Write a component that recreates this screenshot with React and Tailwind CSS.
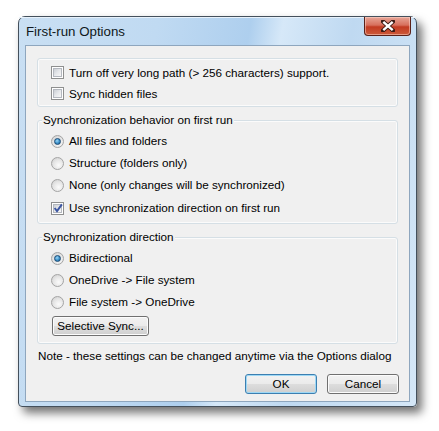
import React, { useState } from "react";

const Check = ({ checked }) => (
  <span className="w-[13px] h-[13px] shrink-0 border border-[#8e8f8f] bg-white p-[1px] flex">
    <span className="relative flex-1 border border-[#b4b8bf] bg-[linear-gradient(135deg,#cbcfd5_0%,#e6e8eb_50%,#f7f7f7_100%)]">
      {checked && (
        <svg viewBox="0 0 9 9" className="absolute left-[-1px] top-[-2px] w-[10px] h-[10px]">
          <path d="M1.5 4.5 L3.6 7.2 L8 1.2" fill="none" stroke="#3c56a2" strokeWidth="1.8" />
        </svg>
      )}
    </span>
  </span>
);

const Radio = ({ checked }) => (
  <span className="w-[13px] h-[13px] shrink-0 rounded-full border border-[#a4a4a4] bg-[radial-gradient(circle_at_60%_65%,#fbfbfb_0%,#e4e4e4_55%,#c8c8c8_100%)] flex items-center justify-center">
    {checked && (
      <span className="w-[7px] h-[7px] rounded-full border border-[#1b4a74] bg-[radial-gradient(circle_at_40%_35%,#9bd6f6_0%,#3a8fc8_55%,#1c5b8c_100%)]" />
    )}
  </span>
);

const Row = ({ h = "h-[22px]", children }) => (
  <div className={`${h} flex items-center gap-[5px] pl-[13px]`}>{children}</div>
);

const Group = ({ label, className, children }) => (
  <div className={`mx-[11px] border border-[#d5dfe5] rounded-[3px] shadow-[inset_0_0_0_1px_#fbfbfb] ${className}`}>
    {label && (
      <div className="-mt-[8px] mb-[3px] ml-[4px] w-fit px-[1px] bg-[#f0f0f0] leading-[14px]">{label}</div>
    )}
    {children}
  </div>
);

const Btn = ({ primary, children, className = "" }) => (
  <button
    className={`h-[20px] rounded-[3px] border leading-[16px] ${
      primary
        ? "border-[#3c7fb1] shadow-[inset_0_0_0_1px_#9ed8f5]"
        : "border-[#707070] shadow-[inset_0_0_0_1px_#fcfcfc]"
    } bg-[linear-gradient(#f2f2f2_0%,#ebebeb_48%,#dddddd_52%,#cfcfcf_100%)] ${className}`}
  >
    {children}
  </button>
);

export default function App() {
  const [mode, setMode] = useState(0);
  const [dir, setDir] = useState(0);

  return (
    <div
      className="w-[439px] h-[431px] bg-white pl-[18px] pt-[16px] text-[11.7px] text-black"
      style={{ fontFamily: '"Liberation Sans", Arial, sans-serif' }}
    >
      <div className="w-[399px] h-[391px] rounded-t-[7px] rounded-b-[4px] border border-[#44505c] bg-[linear-gradient(100deg,#c9dff3_0%,#c0daf2_30%,#aecfee_50%,#d6e8f8_57%,#bfd9f1_72%,#d5e7f7_100%)] shadow-[5px_6px_10px_rgba(0,0,0,0.55)] flex flex-col">
        <div className="h-[28px] flex items-start justify-between pl-[7px] pr-[5px] shadow-[inset_0_1px_0_#e8f2fb]">
          <div className="pt-[7px] text-[13.3px] text-[#101820] leading-[15px]">First-run Options</div>
          <div className="w-[47px] h-[19px] rounded-b-[4px] border border-t-0 border-[#5a2018] bg-[linear-gradient(#e7a597_0%,#d7705d_45%,#c23b22_55%,#cc5a3a_100%)] shadow-[inset_0_0_0_1px_rgba(255,220,210,0.5)] flex items-center justify-center">
            <svg viewBox="0 0 14 12" className="w-[14px] h-[12px]">
              <path d="M2 1.5 L12 10.5 M12 1.5 L2 10.5" stroke="#3a1a14" strokeWidth="4.2" strokeLinecap="square" />
              <path d="M2.3 1.8 L11.7 10.2 M11.7 1.8 L2.3 10.2" stroke="#ffffff" strokeWidth="2.4" />
            </svg>
          </div>
        </div>
        <div className="mx-[6px] h-[357px] border border-[#8ea6be] bg-[#f0f0f0] flex flex-col">
          <Group className="mt-[12px] h-[49px] pt-[3px]">
            <Row h="h-[21px]">
              <Check />
              <span>Turn off very long path (&gt; 256 characters) support.</span>
            </Row>
            <Row h="h-[21px]">
              <Check />
              <span>Sync hidden files</span>
            </Row>
          </Group>

          <Group label="Synchronization behavior on first run" className="mt-[13px] h-[104px]">
            {["All files and folders", "Structure (folders only)", "None (only changes will be synchronized)"].map((t, i) => (
              <div key={t} onClick={() => setMode(i)}>
                <Row>
                  <Radio checked={mode === i} />
                  <span>{t}</span>
                </Row>
              </div>
            ))}
            <div className="mt-[1px]">
              <Row>
                <Check checked />
                <span>Use synchronization direction on first run</span>
              </Row>
            </div>
          </Group>

          <Group label="Synchronization direction" className="mt-[13px] h-[107px]">
            {["Bidirectional", "OneDrive -> File system", "File system -> OneDrive"].map((t, i) => (
              <div key={t} onClick={() => setDir(i)}>
                <Row>
                  <Radio checked={dir === i} />
                  <span>{t}</span>
                </Row>
              </div>
            ))}
            <div className="pl-[14px] mt-[3px]">
              <Btn className="w-[97px] h-[18px] leading-[14px]">Selective Sync...</Btn>
            </div>
          </Group>

          <div className="mt-[5px] ml-[12px] leading-[14px]">
            Note - these settings can be changed anytime via the Options dialog
          </div>

          <div className="mt-[11px] mr-[10px] flex justify-end gap-[10px]">
            <Btn primary className="w-[72px]">OK</Btn>
            <Btn className="w-[72px]">Cancel</Btn>
          </div>
        </div>
      </div>
    </div>
  );
}
